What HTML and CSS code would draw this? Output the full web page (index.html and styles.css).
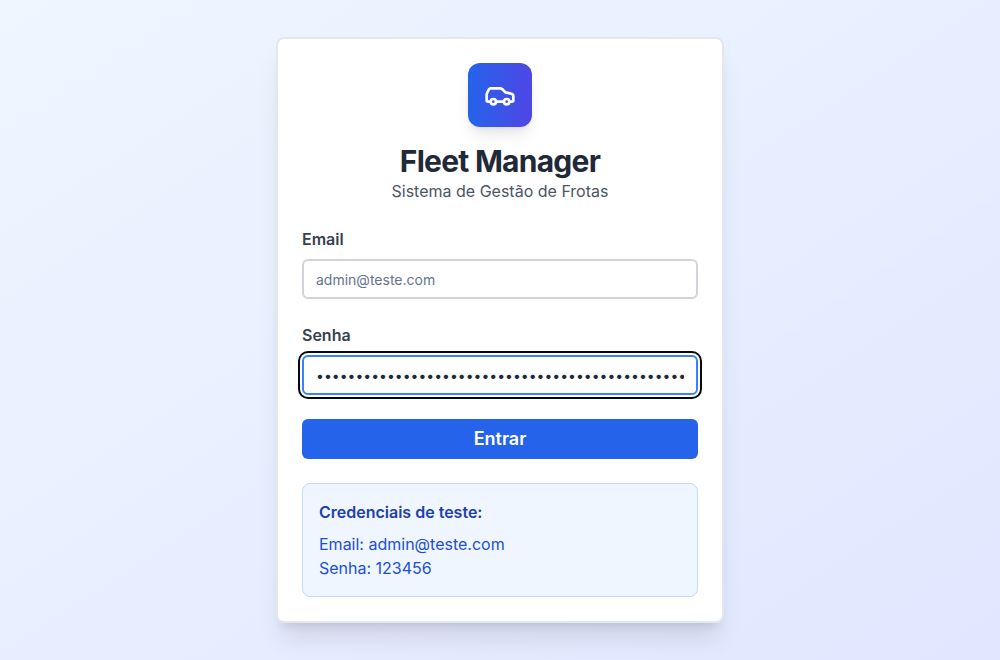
FILE: index.html
```html
<!DOCTYPE html>
<html lang="pt-BR">
<head>
<meta charset="utf-8">
<meta name="viewport" content="width=device-width, initial-scale=1">
<title>Fleet Manager</title>
<link rel="stylesheet" href="styles.css">
</head>
<body class="page">
<main class="card">
  <header class="card-header">
    <div class="logo">
      <svg class="logo-icon" viewBox="0 0 24 24" aria-hidden="true">
        <path d="M19 17h2c.6 0 1-.4 1-1v-3c0-.9-.7-1.7-1.5-1.9C18.7 10.6 16 10 16 10s-1.3-1.4-2.2-2.3c-.5-.4-1.1-.7-1.8-.7H5c-.6 0-1.1.4-1.4.9l-1.4 2.9A3.7 3.7 0 0 0 2 12v4c0 .6.4 1 1 1h2"/>
        <circle cx="7" cy="17" r="2"/>
        <path d="M9 17h6"/>
        <circle cx="17" cy="17" r="2"/>
      </svg>
    </div>
    <h1 class="title">Fleet Manager</h1>
    <p class="subtitle">Sistema de Gestão de Frotas</p>
  </header>
  <form class="form">
    <div class="field">
      <label class="label" for="email">Email</label>
      <input class="input" id="email" type="email" placeholder="admin@teste.com">
    </div>
    <div class="field">
      <label class="label" for="password">Senha</label>
      <input class="input input-active" id="password" type="password" value="12345678901234567890123456789012345678901234567">
    </div>
    <button class="submit" type="submit">Entrar</button>
  </form>
  <section class="hint">
    <h2 class="hint-title">Credenciais de teste:</h2>
    <p class="hint-text">Email: admin@teste.com</p>
    <p class="hint-text">Senha: 123456</p>
  </section>
</main>
</body>
</html>
```
FILE: styles.css
```css
* {
  box-sizing: border-box;
  margin: 0;
}

.page {
  min-height: 100vh;
  padding: 16px;
  display: flex;
  align-items: center;
  justify-content: center;
  background: linear-gradient(to bottom right, #eff6ff, #e0e7ff);
  font-family: Inter, sans-serif;
  font-size: 16px;
  line-height: 24px;
  color: #1f2937;
}

.card {
  width: 100%;
  max-width: 448px;
  padding: 24px;
  display: flex;
  flex-direction: column;
  gap: 24px;
  background: #fff;
  border: 2px solid #e5e7eb;
  border-radius: 8px;
  box-shadow: 0 20px 25px -5px rgba(0, 0, 0, 0.1), 0 8px 10px -6px rgba(0, 0, 0, 0.1);
}

.card-header {
  display: flex;
  flex-direction: column;
  align-items: center;
  text-align: center;
}

.logo {
  width: 64px;
  height: 64px;
  margin-bottom: 16px;
  display: flex;
  align-items: center;
  justify-content: center;
  border-radius: 12px;
  background: linear-gradient(to right, #2563eb, #4f46e5);
  box-shadow: 0 10px 15px -3px rgba(0, 0, 0, 0.1), 0 4px 6px -4px rgba(0, 0, 0, 0.1);
}

.logo-icon {
  width: 32px;
  height: 32px;
  fill: none;
  stroke: #fff;
  stroke-width: 2;
  stroke-linecap: round;
  stroke-linejoin: round;
}

.title {
  font-size: 30px;
  line-height: 36px;
  font-weight: 700;
  letter-spacing: -0.025em;
}

.subtitle {
  color: #4b5563;
}

.form {
  display: flex;
  flex-direction: column;
  gap: 24px;
}

.field {
  display: flex;
  flex-direction: column;
  gap: 8px;
}

.label {
  font-weight: 600;
  color: #374151;
}

.input {
  width: 100%;
  height: 40px;
  padding: 8px 12px;
  border: 2px solid #d1d5db;
  border-radius: 6px;
  background: #fff;
  color: #1f2937;
  font: 14px/20px Inter, sans-serif;
}

.input::placeholder {
  color: #64748b;
}

.input:focus,
.input-active {
  outline: none;
  border-color: #3b82f6;
  box-shadow: 0 0 0 2px #fff, 0 0 0 4px #020817;
}

.submit {
  height: 40px;
  padding: 8px 16px;
  border: 0;
  border-radius: 6px;
  background: #2563eb;
  color: #fff;
  font: 600 18px/24px Inter, sans-serif;
}

.hint {
  padding: 16px;
  border: 1px solid #bfdbfe;
  border-radius: 8px;
  background: #eff6ff;
  color: #1d4ed8;
}

.hint-title {
  margin-bottom: 8px;
  font-size: 16px;
  line-height: 24px;
  font-weight: 600;
  color: #1e40af;
}
```
